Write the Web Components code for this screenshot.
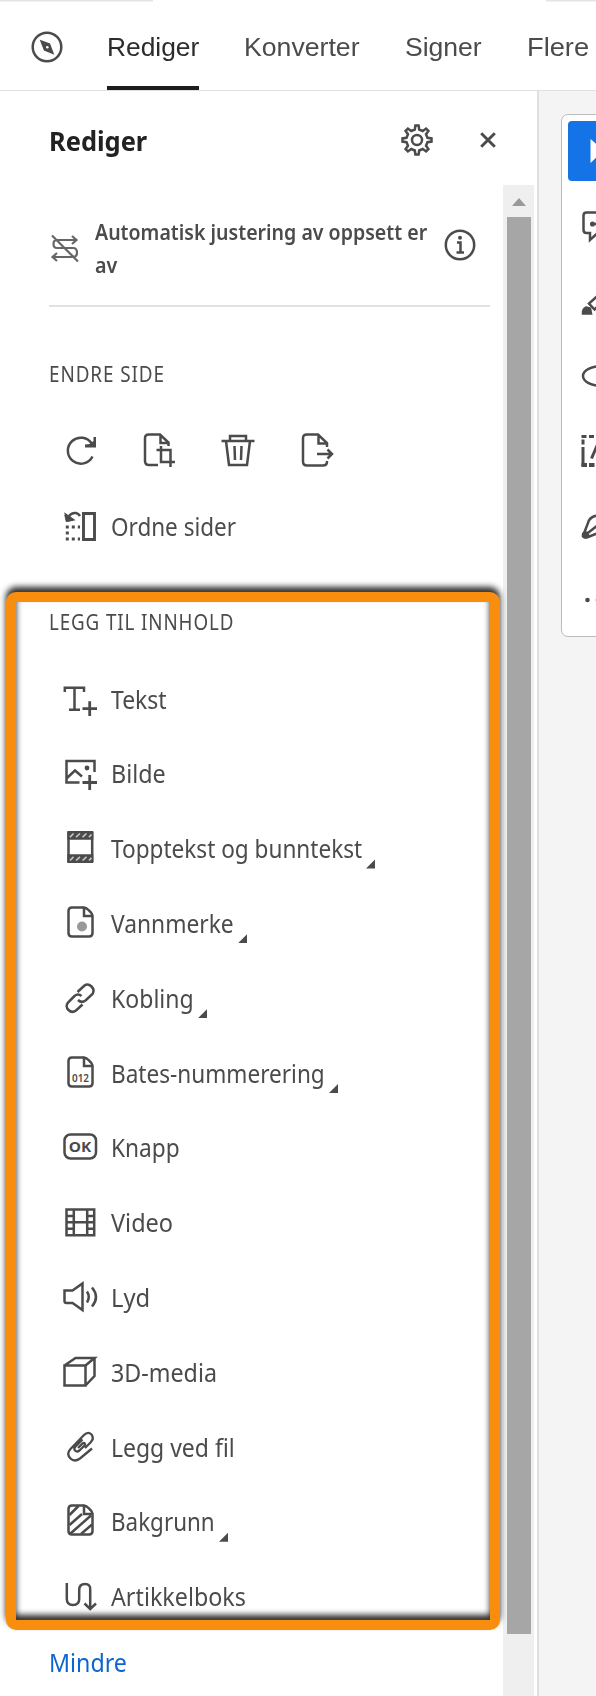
<!DOCTYPE html>
<html lang="nb">
<head>
<meta charset="utf-8">
<title>Rediger</title>
<style>
	body {
		margin: 0;
		width: 596px;
		height: 1696px;
		overflow: hidden;
		background: #fff;
		color: #4b4b4b;
		font-family: 'Noto Sans', 'Open Sans', sans-serif;
	}
</style>
</head>
<body>
<edit-app></edit-app>

<script>
const page = 'M22 2.500H10Q6.500 2.500 6.500 6V28Q6.500 31.500 10 31.500H27Q30.500 31.500 30.500 28V10.500Q30 8 27 5.500Q24.500 2.800 22 2.500V11H30.500';

const icons = {
	compass: '<circle cx="18" cy="18" r="14.300"/><path fill="currentColor" stroke-width="1.500" d="M12 12L20.500 15L24 24.500L15.500 21Z"/><circle cx="18.300" cy="18.300" r="1.300" fill="#fff" stroke="none"/>',
	gear: '<circle cx="18" cy="18" r="5"/><path d="M15.800 7.500L16.400 3.500H19.600L20.200 7.500L23.800 9L27.100 6.600L29.400 8.900L27 12.200L28.500 15.800L32.500 16.400V19.600L28.500 20.200L27 23.800L29.400 27.100L27.100 29.400L23.800 27L20.200 28.500L19.600 32.500H16.400L15.800 28.500L12.200 27L8.900 29.400L6.600 27.100L9 23.800L7.500 20.200L3.500 19.600V16.400L7.500 15.800L9 12.200L6.600 8.900L8.900 6.600L12.200 9Z"/>',
	close: '<path stroke-width="2.900" d="M11.200 11.200L24.800 24.800M24.800 11.200L11.200 24.800"/>',
	layout: '<path stroke-width="2.200" d="M29 10H10Q6.500 10 6.500 14T10 18H26Q30 18 30 22.500T26 27H6M25 6L29.500 10L25 14M10 23L5.500 27L10 31M5 5.500L31 31.500"/>',
	info: '<circle cx="18" cy="18" r="14.200"/><path d="M15 15.500H18.500V25M14.500 25.500H22"/><circle cx="18" cy="10.800" r="2" fill="currentColor" stroke="none"/>',
	rotate: '<path d="M29.500 24.500A13 13 0 1 1 29 12"/><path fill="currentColor" stroke="none" d="M33 5V15.500H22V12.500L26.500 12L30.500 9V5Z"/>',
	crop: '<path d="M17 33H8Q4 33 4 29V6Q4 2.500 8 2.500H19L27.500 10.500V14M19.500 3V11H27"/><path d="M15.500 18H29.500V35M20 14V30H34"/>',
	trash: '<path d="M1.500 9H34.500M10 8V4H26V8M6 9L9 33H27L30 9M14.500 14L15 28M21.500 14L21 28"/>',
	exportPage: '<path d="M28 29V29.500Q28 33.500 24 33.500H8Q4 33.500 4 29.500V6Q4 2.500 8 2.500H19L28 11V15M19.500 3V11.500H27M18 22H33M28.500 17.500L33 22L28.500 26.500"/>',
	arrange: '<path stroke-width="2.900" d="M21.500 5.500H32.500V31.500H21.500Z"/><path d="M5 12Q8 4 14 5Q16.500 5.500 18 8M3.500 7L5 12.500L11 11.500"/><path fill="currentColor" d="M4 7L5 12.500L10.500 11.500Z"/><path stroke-width="3" stroke-dasharray="3 3" d="M3.800 19H18M3.800 31H18"/><path stroke-width="3" d="M3.800 25H6.800"/>',
	text: '<path d="M2.800 11V6.800H22V11M12.500 7V28.800M7 28.800H18"/><path stroke-width="2.800" d="M20.500 27.700H35M27.700 20.300V35"/>',
	image: '<path d="M32.500 17V6H4.500V27.500H17.500M5 23L13 15.500L20 21.500"/><circle cx="25" cy="13" r="2.400" fill="currentColor" stroke="none"/><path stroke-width="2.800" d="M20.500 27.500H35M27.700 20V35"/>',
	header: '<path d="M6.500 2V32M30.200 2V32"/><path fill="currentColor" stroke="none" d="M5.300 1H31.300V9.700H5.300ZM5.300 24.300H31.300V33H5.300Z"/><path stroke="#c4c4c4" stroke-width="1.700" d="M8 7.200L11.500 3.500M14 7.200L18 3.500M20.500 7.200L24.500 3.500M27 7.200L29.500 4.500M8 30.500L11.500 26.800M14 30.500L18 26.800M20.500 30.500L24.500 26.800M27 30.500L29.500 27.800"/>',
	watermark: `<path d="${page}"/><circle cx="20" cy="21.500" r="5" fill="#999" stroke="none"/>`,
	link: '<path d="M15.500 12L22.500 5.500Q26 3 29.500 6.500Q33 10 30.500 14L23.500 20.500Q19.500 23.500 16 20M20.500 24.500L14 30.500Q10 33.500 6.500 30Q3 26.500 6 22.500L12.500 16Q16 13 19.500 16"/>',
	bates: `<path d="${page}"/><text x="10" y="26.800" font-size="10.500" font-weight="600" textLength="17" lengthAdjust="spacingAndGlyphs">012</text>`,
	button: '<rect x="2.500" y="5.500" width="31.500" height="24" rx="6"/><text x="6.800" y="22.800" font-size="14.500" font-weight="700" textLength="22.500" lengthAdjust="spacingAndGlyphs">OK</text>',
	video: '<path d="M4.500 5.500H32.200V31.200H4.500ZM11.800 5.500V31M25.200 5.500V31M12 18.300H25M4.500 11.900H11.500M4.500 18.300H11.500M4.500 24.700H11.500M25.500 11.900H32M25.500 18.300H32M25.500 24.700H32"/>',
	sound: '<path d="M2.500 11.500H10.500L20.500 4.500V31L10.500 24H4.500Q2.500 24 2.500 22Z"/><path d="M25 12.500Q28.500 18 25 23.500M30 8.500Q38 18 30 27.500"/>',
	cube: '<path d="M2.500 11.500H23.500V31.500H2.500ZM2.500 11.500L13.500 4H32.500L23.500 11.500M32.500 4V22L23.500 31.500"/>',
	clip: '<path stroke-width="2.300" d="M16 19L20.500 14.500Q22 13.500 22.800 14.500Q23.500 15.500 22.500 16.500L17.500 21.500Q15 23.500 13 21.500Q11.500 19.500 13.500 17.500L20.500 10.500M30 19.500L18 29.500Q12.500 33.500 8.500 29.500Q4 25 8.500 20L22 6Q26 2 29.500 5.500Q32.500 9.500 28.500 13.500L23 19"/>',
	background: `<path d="${page}"/><path d="M7.500 12L16.500 3M7.500 22L20 11M8.500 30.500L29 12.500M19 31L30 21.500"/>`,
	article: '<path d="M4.800 5V21Q4.800 27 11 27T17.200 21V12Q17.200 6 23 6T28.200 12V31M22.500 25.500L28.200 31L34 25.500"/>',
	pointer: '<path fill="currentColor" stroke="none" d="M9.500 6V30L17 23L28 22Z"/>',
	comment: '<path d="M28 4.500H5.500Q2.500 4.500 2.500 7.500V22Q2.500 25 5.500 25H9V32L16 25.500M12 16H22"/><circle cx="11.500" cy="16" r="1.300" fill="currentColor"/>',
	marker: '<path d="M28 2.500L8 20.500L13.500 26.500L30 9.500"/><path fill="currentColor" d="M5 24.500L9 25.500L10 30.500H2Q1.500 26.500 5 24.500Z"/>',
	lasso: '<ellipse cx="21" cy="18" rx="19" ry="10"/>',
	textbox: '<path stroke-width="3" stroke-dasharray="5 2.500" d="M.5 3.500H30"/><path stroke-width="3" stroke-dasharray="5 2.500 18 0" d="M2 6.500V33.500"/><path stroke-width="4" stroke-dasharray="5.500 2" d="M.5 32H30"/><path stroke-width="3" d="M10.500 25.500L18 8"/>',
	pen: '<path d="M28 6L14 8Q8 10 7 15L2 28Q4 30 7 29L20 24L27 18M3 28L17 17"/><circle cx="4.500" cy="27" r="2.500" fill="currentColor"/>',
	more: '<circle cx="6.500" cy="17" r="2.300" fill="currentColor" stroke="none"/><circle cx="17" cy="17" r="2.300" fill="currentColor" stroke="none"/>'
};

class ToolIcon extends HTMLElement {
	constructor() {
		super();
		this.attachShadow({mode: 'open'});
	}

	connectedCallback() {
		this.shadowRoot.innerHTML = `
			<style>
				:host { display: block; flex: none; width: 36px; height: 36px; }
				svg { display: block; overflow: visible; }
				text { fill: currentColor; stroke: none; font-family: 'Noto Sans', sans-serif; }
			</style>
			<svg width="36" height="36" viewBox="0 0 36 36" fill="none" stroke="currentColor" stroke-width="2.500">${icons[this.getAttribute('name')]}</svg>
		`;
	}
}
customElements.define('tool-icon', ToolIcon);

// One line of text, condensed or widened to the given width
class FitText extends HTMLElement {
	constructor() {
		super();
		this.attachShadow({mode: 'open'}).innerHTML = `
			<style>
				:host { display: block; flex: none; white-space: nowrap; }
				span { display: inline-block; transform-origin: 0 50%; }
			</style>
			<span><slot></slot></span>
		`;
	}

	connectedCallback() {
		const span = this.shadowRoot.querySelector('span');
		const width = Number(this.getAttribute('width'));
		this.style.width = `${width}px`;
		span.style.transform = `scaleX(${width / span.offsetWidth})`;
	}
}
customElements.define('fit-text', FitText);

class NavTab extends HTMLElement {
	constructor() {
		super();
		this.attachShadow({mode: 'open'}).innerHTML = `
			<style>
				:host {
					display: flex;
					align-items: center;
					box-sizing: border-box;
					height: 90px;
					padding-top: 8px;
					border-bottom: 4px solid transparent;
					font: 25.500px 'Liberation Sans', Arial, sans-serif;
				}
				:host([active]) { color: #2c2c2c; border-color: #1d1d1d; }
			</style>
			<slot></slot>
		`;
	}
}
customElements.define('nav-tab', NavTab);

class ToolRow extends HTMLElement {
	constructor() {
		super();
		this.attachShadow({mode: 'open'});
	}

	connectedCallback() {
		this.shadowRoot.innerHTML = `
			<style>
				:host { display: flex; align-items: center; height: 74.800px; padding-left: 62px; font-size: 25px; }
				fit-text { margin-left: 12.700px; line-height: 36px; }
				i { width: 9.500px; height: 9.500px; margin: 31px 0 0 4.300px; background: #4b4b4b; clip-path: polygon(100% 0, 100% 100%, 0 100%); }
			</style>
			<tool-icon name="${this.getAttribute('icon')}"></tool-icon>
			<fit-text width="${this.getAttribute('width')}"><slot></slot></fit-text>
			${this.hasAttribute('menu') ? '<i></i>' : ''}
		`;
	}
}
customElements.define('tool-row', ToolRow);

class EditPanel extends HTMLElement {
	constructor() {
		super();
		this.attachShadow({mode: 'open'}).innerHTML = `
			<style>
				:host { display: block; position: relative; width: 503px; }
				header { display: flex; align-items: center; height: 98px; padding-left: 49px; color: #222; font-size: 27px; font-weight: 700; }
				header tool-icon { color: #4b4b4b; }
				.gear { margin-left: 252px; }
				.close { margin-left: 35px; }
				.auto { display: flex; box-sizing: border-box; width: 441px; height: 118px; margin-left: 49px; padding-top: 26px; border-bottom: 2px solid #e1e1e1; }
				.auto tool-icon { margin-top: 12px; }
				.auto .layout { margin: 15px 0 0 -2px; color: #666; }
				.label { width: 347px; margin-left: 12px; font-size: 21.500px; font-weight: 600; line-height: 33.400px; }
				h3 { margin: 0; padding-left: 49px; font-size: 21px; font-weight: 400; line-height: 30px; letter-spacing: 1px; }
				.change { padding-top: 52px; }
				.pages { display: flex; gap: 42.700px; padding: 43px 0 0 62.500px; }
				.arrange { margin-top: 20.500px; }
				.add { margin-top: 44px; }
				.tools { padding-top: 24px; }
				.less { padding: 10px 0 0 49px; color: #0d66d0; font-size: 25px; line-height: 36px; }
				.highlight {
					position: absolute;
					left: 6px;
					top: 501px;
					box-sizing: border-box;
					width: 494px;
					height: 1038px;
					border: 10px solid #f88d0e;
					border-radius: 10px;
					filter: drop-shadow(0 -5px 3px rgba(0, 0, 0, .85));
				}
			</style>
			<header>
				<fit-text width="98">Rediger</fit-text>
				<tool-icon class="gear" name="gear"></tool-icon>
				<tool-icon class="close" name="close"></tool-icon>
			</header>
			<div class="auto">
				<tool-icon class="layout" name="layout"></tool-icon>
				<div class="label">
					<fit-text width="332">Automatisk justering av oppsett er</fit-text>
					<fit-text width="22">av</fit-text>
				</div>
				<tool-icon name="info"></tool-icon>
			</div>
			<h3 class="change"><fit-text width="116">ENDRE SIDE</fit-text></h3>
			<div class="pages">
				<tool-icon name="rotate"></tool-icon>
				<tool-icon name="crop"></tool-icon>
				<tool-icon name="trash"></tool-icon>
				<tool-icon name="exportPage"></tool-icon>
			</div>
			<tool-row class="arrange" icon="arrange" width="125">Ordne sider</tool-row>
			<h3 class="add"><fit-text width="185">LEGG TIL INNHOLD</fit-text></h3>
			<div class="tools">
				<tool-row icon="text" width="56">Tekst</tool-row>
				<tool-row icon="image" width="55">Bilde</tool-row>
				<tool-row icon="header" width="251" menu>Topptekst og bunntekst</tool-row>
				<tool-row icon="watermark" width="123" menu>Vannmerke</tool-row>
				<tool-row icon="link" width="83" menu>Kobling</tool-row>
				<tool-row icon="bates" width="214" menu>Bates-nummerering</tool-row>
				<tool-row icon="button" width="69">Knapp</tool-row>
				<tool-row icon="video" width="62">Video</tool-row>
				<tool-row icon="sound" width="39">Lyd</tool-row>
				<tool-row icon="cube" width="106">3D-media</tool-row>
				<tool-row icon="clip" width="124">Legg ved fil</tool-row>
				<tool-row icon="background" width="104" menu>Bakgrunn</tool-row>
				<tool-row icon="article" width="135">Artikkelboks</tool-row>
			</div>
			<div class="less"><fit-text width="78">Mindre</fit-text></div>
			<div class="highlight"></div>
		`;
	}
}
customElements.define('edit-panel', EditPanel);

class ScrollTrack extends HTMLElement {
	constructor() {
		super();
		this.attachShadow({mode: 'open'}).innerHTML = `
			<style>
				:host { display: block; box-sizing: border-box; width: 31px; margin-top: 94px; padding: 13px 3px 0 4px; background: #efefef; }
				.up { width: 14px; height: 8px; margin: 0 auto 11px 5px; background: #999; clip-path: polygon(50% 0, 100% 100%, 0 100%); }
				.thumb { height: 1417px; background: #a6a6a6; }
			</style>
			<div class="up"></div>
			<div class="thumb"></div>
		`;
	}
}
customElements.define('scroll-track', ScrollTrack);

class QuickTools extends HTMLElement {
	constructor() {
		super();
		this.attachShadow({mode: 'open'}).innerHTML = `
			<style>
				:host {
					display: flex;
					flex-direction: column;
					box-sizing: border-box;
					width: 72px;
					height: 523px;
					margin: 23px 0 0 22px;
					padding: 6px 0 0 6px;
					border: 1.500px solid #bcbcbc;
					border-radius: 7px;
					background: #fff;
				}
				div { display: flex; align-items: center; flex: none; width: 60px; height: 75px; padding-left: 13px; }
				.active { width: 47px; height: 60px; margin-bottom: 7px; border-radius: 4px; background: #1473e6; color: #fff; }
			</style>
			<div class="active"><tool-icon name="pointer"></tool-icon></div>
			<div><tool-icon name="comment"></tool-icon></div>
			<div><tool-icon name="marker"></tool-icon></div>
			<div><tool-icon name="lasso"></tool-icon></div>
			<div><tool-icon name="textbox"></tool-icon></div>
			<div><tool-icon name="pen"></tool-icon></div>
			<div><tool-icon name="more"></tool-icon></div>
		`;
	}
}
customElements.define('quick-tools', QuickTools);

class EditApp extends HTMLElement {
	constructor() {
		super();
		this.attachShadow({mode: 'open'}).innerHTML = `
			<style>
				:host { display: block; width: 596px; height: 1696px; overflow: hidden; }
				nav {
					display: flex;
					box-sizing: border-box;
					height: 91px;
					padding-left: 28.500px;
					border-bottom: 1.500px solid #e0e0e0;
					background: linear-gradient(90deg, #e4e4e4 153px, transparent 153px 546px, #e4e4e4 546px) 0 0 / 100% 1.500px no-repeat;
				}
				nav tool-icon { margin: 28.500px 42.500px 0 0; }
				nav-tab { flex: none; margin-right: 45px; }
				main { display: flex; height: 1605px; }
				.canvas { flex: 1; margin-left: 3px; border-left: 2px solid #e0e0e0; background: #f4f4f4; overflow: hidden; }
			</style>
			<nav>
				<tool-icon name="compass"></tool-icon>
				<nav-tab active><fit-text width="92">Rediger</fit-text></nav-tab>
				<nav-tab><fit-text width="116">Konverter</fit-text></nav-tab>
				<nav-tab><fit-text width="77">Signer</fit-text></nav-tab>
				<nav-tab><fit-text width="62">Flere</fit-text></nav-tab>
			</nav>
			<main>
				<edit-panel></edit-panel>
				<scroll-track></scroll-track>
				<div class="canvas"><quick-tools></quick-tools></div>
			</main>
		`;
	}
}
customElements.define('edit-app', EditApp);
</script>
</body>
</html>
